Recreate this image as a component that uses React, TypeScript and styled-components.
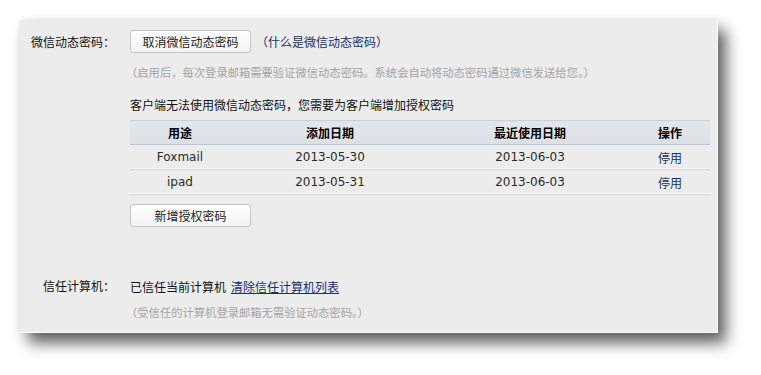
import React from "react";
import styled, { createGlobalStyle } from "styled-components";

const Global = createGlobalStyle`
  html, body { margin: 0; padding: 0; background: #ffffff; }
  body { font-family: "DejaVu Sans", "Noto Sans CJK SC", sans-serif; font-size: 12px; color: #000; }
`;

const Page = styled.div`
  width: 761px;
  height: 375px;
  padding: 20px 0 0 20px;
  box-sizing: border-box;
`;

const Panel = styled.div`
  width: 698px;
  height: 313px;
  box-sizing: border-box;
  background: #ececec;
  border-right: 1px solid #fbfbfb;
  border-bottom: 1px solid #fbfbfb;
  box-shadow: 8px 10px 14px rgba(0, 0, 0, 0.62), 0 0 6px rgba(0, 0, 0, 0.08);
  padding: 10px 8px 0 0;
`;

const Section = styled.div<{ $top?: number }>`
  display: grid;
  grid-template-columns: 110px 1fr;
  margin-top: ${(p) => p.$top ?? 0}px;
`;

const Label = styled.div<{ $h: number }>`
  text-align: right;
  padding-right: 15px;
  height: ${(p) => p.$h}px;
  line-height: ${(p) => p.$h}px;
  font-family: "Noto Sans CJK SC", sans-serif;
  color: #111;
`;

const Content = styled.div`
  display: flex;
  flex-direction: column;
  align-items: flex-start;
`;

const Line = styled.div<{ $h?: number; $mt?: number }>`
  display: flex;
  align-items: center;
  height: ${(p) => p.$h ?? 20}px;
  margin-top: ${(p) => p.$mt ?? 0}px;
  font-family: "Noto Sans CJK SC", sans-serif;
  white-space: nowrap;
`;

const Button = styled.button`
  width: 121px;
  height: 23px;
  box-sizing: border-box;
  border: 1px solid #c4c4c4;
  border-radius: 3px;
  background: linear-gradient(#ffffff, #f3f3f3);
  font-family: "Noto Sans CJK SC", sans-serif;
  font-size: 12px;
  color: #222;
  padding: 0;
  cursor: pointer;
`;

const Link = styled.a<{ $underline?: boolean }>`
  color: #1a2f62;
  text-decoration: ${(p) => (p.$underline ? "underline" : "none")};
  font-family: "Noto Sans CJK SC", sans-serif;
  cursor: pointer;
`;

const SideLink = styled(Link)`
  margin-left: 5px;
`;

const Hint = styled.span`
  color: #a4a4a4;
  font-size: 11.3px;
  margin-left: -4px;
`;

const Plain = styled.span`
  color: #111;
`;

const Table = styled.table`
  width: 580px;
  border-collapse: collapse;
  margin-top: 6px;
`;

const Th = styled.th`
  height: 23px;
  padding: 0;
  background: linear-gradient(#e3e6ea, #dcdfe4);
  border-top: 1px solid #c8d2de;
  border-bottom: 1px solid #b9c6d6;
  font-family: "Noto Sans CJK SC", sans-serif;
  font-weight: bold;
  font-size: 12px;
  color: #000;
  text-align: center;
`;

const Td = styled.td`
  height: 24px;
  padding: 0;
  text-align: center;
  color: #2a2a2a;
  border-bottom: 1px solid #d7d7d7;
  box-shadow: inset 0 -1px 0 #f6f6f6;
  font-family: "DejaVu Sans", "Noto Sans CJK SC", sans-serif;
  font-size: 12px;
`;

const rows = [
  { use: "Foxmail", added: "2013-05-30", last: "2013-06-03" },
  { use: "ipad", added: "2013-05-31", last: "2013-06-03" },
];

export default function App() {
  return (
    <>
      <Global />
      <Page>
        <Panel>
          <Section>
            <Label $h={23}>微信动态密码：</Label>
            <Content>
              <Line $h={23}>
                <Button>取消微信动态密码</Button>
                <SideLink>（什么是微信动态密码）</SideLink>
              </Line>
              <Line $mt={9}>
                <Hint>（启用后，每次登录邮箱需要验证微信动态密码。系统会自动将动态密码通过微信发送给您。）</Hint>
              </Line>
              <Line $mt={12}>
                <Plain>客户端无法使用微信动态密码，您需要为客户端增加授权密码</Plain>
              </Line>
              <Table>
                <colgroup>
                  <col style={{ width: 100 }} />
                  <col style={{ width: 200 }} />
                  <col style={{ width: 200 }} />
                  <col style={{ width: 80 }} />
                </colgroup>
                <thead>
                  <tr>
                    <Th>用途</Th>
                    <Th>添加日期</Th>
                    <Th>最近使用日期</Th>
                    <Th>操作</Th>
                  </tr>
                </thead>
                <tbody>
                  {rows.map((r) => (
                    <tr key={r.use}>
                      <Td>{r.use}</Td>
                      <Td>{r.added}</Td>
                      <Td>{r.last}</Td>
                      <Td>
                        <Link>停用</Link>
                      </Td>
                    </tr>
                  ))}
                </tbody>
              </Table>
              <Line $h={23} $mt={9}>
                <Button>新增授权密码</Button>
              </Line>
            </Content>
          </Section>
          <Section $top={49}>
            <Label $h={20}>信任计算机：</Label>
            <Content>
              <Line>
                <Plain>已信任当前计算机</Plain>
                <SideLink $underline>清除信任计算机列表</SideLink>
              </Line>
              <Line $mt={6}>
                <Hint>（受信任的计算机登录邮箱无需验证动态密码。）</Hint>
              </Line>
            </Content>
          </Section>
        </Panel>
      </Page>
    </>
  );
}
